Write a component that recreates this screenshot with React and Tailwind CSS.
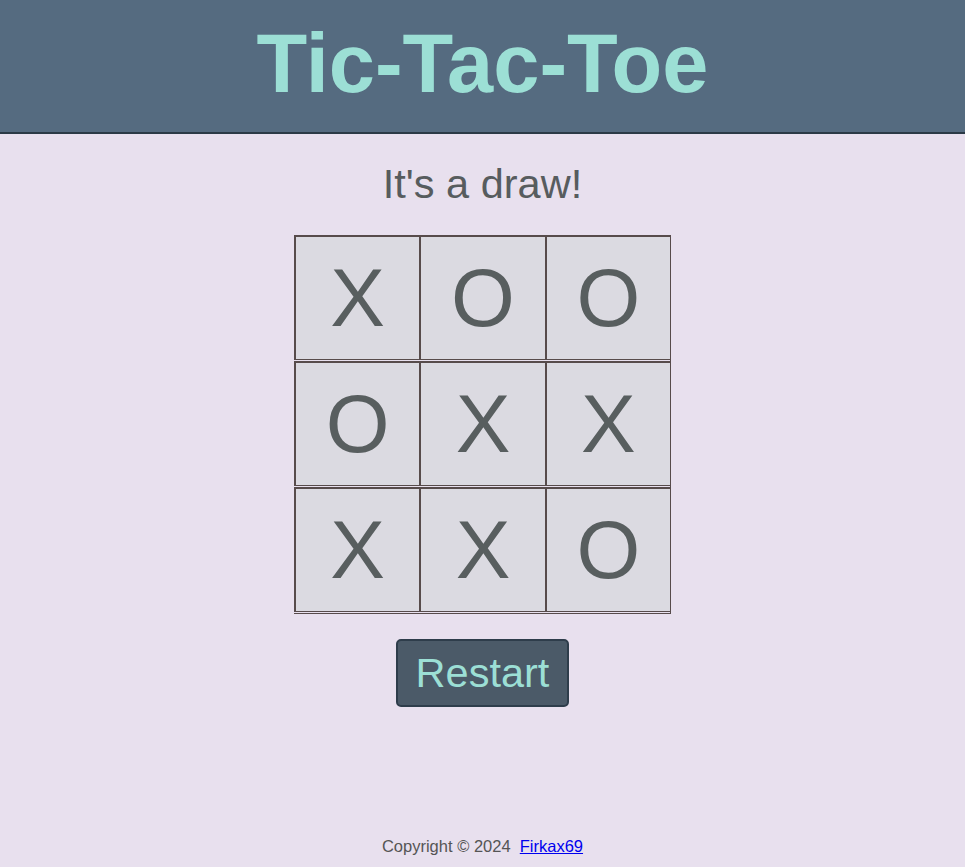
export default function App() {
  // final board state
  const cells = ["X", "O", "O", "O", "X", "X", "X", "X", "O"];

  return (
    <div className="min-h-screen flex flex-col bg-[#e8e0ee] font-['Liberation_Sans',Arial,sans-serif]">
      {/* Header */}
      <header className="h-[134px] flex items-center justify-center bg-[#556b80] border-b-2 border-[#2b3a46]">
        <h1 className="text-[83px] font-bold leading-[94px] text-[#9cdfd5] pb-1">Tic-Tac-Toe</h1>
      </header>

      {/* Game */}
      <main className="flex flex-col items-center">
        <p className="mt-[26px] text-[41.5px] leading-[48px] text-[#575c5e]">It's a draw!</p>

        <div className="mt-[27px] grid grid-cols-3 w-[377px] border-r border-b border-[#574b4b] bg-[#e8e0ee]">
          {cells.map((c, i) => (
            <div
              key={i}
              className="h-[125px] flex items-center justify-center bg-[#dbdae1] border-2 border-r-0 border-[#574b4b] border-b-[1px] mb-[1px] text-[82px] leading-none text-[#585e5f]"
            >
              {c}
            </div>
          ))}
        </div>

        <button className="mt-[25px] px-[18px] py-[8px] rounded-[5px] bg-[#4b5a68] border-2 border-[#2e3d4b] text-[41.5px] leading-[48px] text-[#9cdfd5]">
          Restart
        </button>
      </main>

      {/* Footer */}
      <footer className="mt-auto pb-[8px] text-center text-[16.5px] text-[#555555]">
        Copyright © 2024&nbsp;&nbsp;<a href="#" className="text-[#0000ee] underline">Firkax69</a>
      </footer>
    </div>
  );
}
